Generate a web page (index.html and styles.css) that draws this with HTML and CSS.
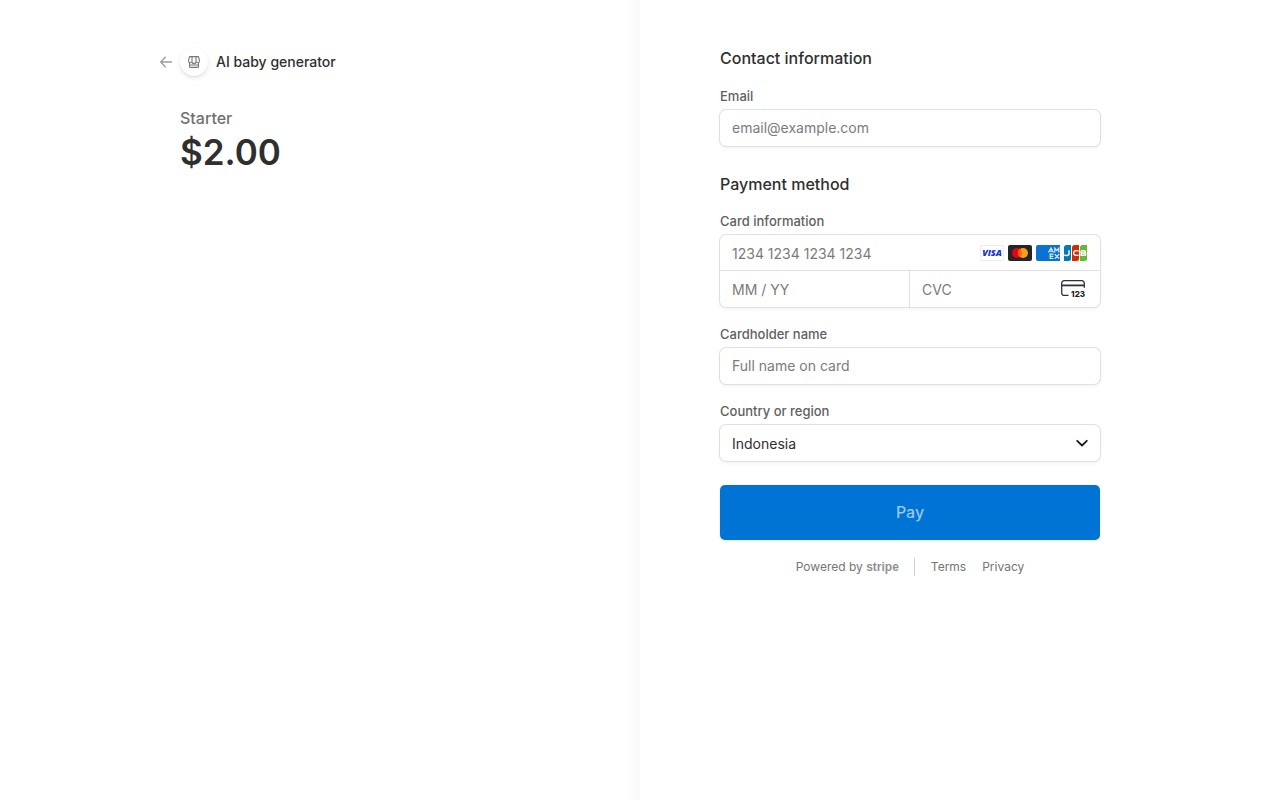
FILE: index.html
```html
<!DOCTYPE html>
<html lang="en">
<head>
<meta charset="utf-8">
<meta name="viewport" content="width=device-width, initial-scale=1">
<title>AI baby generator</title>
<link rel="stylesheet" href="styles.css">
</head>
<body>
<div class="checkout">
  <section class="overview">
    <div class="overview-inner">
      <header class="business">
        <a class="back" href="#" aria-label="Back">
          <svg width="12" height="12" viewBox="0 0 12 12" fill="none" stroke="currentColor" stroke-width="1.3" stroke-linecap="round" stroke-linejoin="round"><path d="M11.5 6H.8M5.3 1.2.7 6l4.6 4.8"/></svg>
        </a>
        <span class="avatar">
          <svg width="12" height="12" viewBox="0 0 12 12" fill="none" stroke="currentColor" stroke-width="1.100" stroke-linejoin="round"><path d="M1.500.6h9l.9 3.700v1a1.800 1.800 0 0 1-3.400.3 2 2 0 0 1-4 0 1.800 1.800 0 0 1-3.400-.3v-1zM4 .6v5M8 .6v5M1.500 7v3.400a1 1 0 0 0 1 1h7a1 1 0 0 0 1-1V7M1.500 9h9"/></svg>
        </span>
        <h1 class="business-name">AI baby generator</h1>
      </header>
      <div class="product">
        <p class="product-name">Starter</p>
        <p class="price">$2.00</p>
      </div>
    </div>
  </section>
  <main class="payment">
    <form class="payment-form">
      <h2 class="heading">Contact information</h2>
      <div class="field">
        <label class="label" for="email">Email</label>
        <input class="input box" id="email" type="email" placeholder="email@example.com">
      </div>
      <h2 class="heading heading-next">Payment method</h2>
      <div class="field">
        <label class="label" for="card">Card information</label>
        <div class="card box">
          <div class="card-number">
            <input class="input" id="card" type="text" placeholder="1234 1234 1234 1234">
            <div class="brands">
              <svg width="24" height="16" viewBox="0 0 24 16" role="img" aria-label="Visa"><rect x=".5" y=".5" width="23" height="15" rx="1.500" fill="#fff" stroke="#ececf2"/><text class="visa" x="12" y="11" text-anchor="middle">VISA</text></svg>
              <svg width="24" height="16" viewBox="0 0 24 16" role="img" aria-label="Mastercard"><rect width="24" height="16" rx="2" fill="#252525"/><circle cx="9" cy="8" r="5" fill="#eb001b"/><circle cx="15" cy="8" r="5" fill="#f79e1b"/><path d="M12 4a5 5 0 0 1 0 8 5 5 0 0 1 0-8z" fill="#ff5f00"/></svg>
              <svg width="24" height="16" viewBox="0 0 24 16" role="img" aria-label="American Express"><path d="M2 0h22v16H2a2 2 0 0 1-2-2V2a2 2 0 0 1 2-2z" fill="#0b72d2"/><path d="M12.500 7.500 15 3l2.500 4.500M13.700 6.200h2.700M18.800 7.500V3.200l2 2.400 2-2.400v4.300M17.500 9.200h-3.300v4.300h3.300M14.200 11.300h3M18.800 9.200l4.400 4.300M23.200 9.200l-4.400 4.300" fill="none" stroke="#d9eafa" stroke-width="1.200"/></svg>
              <svg width="24" height="16" viewBox="0 0 24 16" role="img" aria-label="JCB"><path d="M2.500 0H7v13.500A2.500 2.500 0 0 1 4.500 16H0V2.500A2.500 2.500 0 0 1 2.500 0z" fill="#047ab1"/><path d="M10.500 0H15v13.500a2.500 2.500 0 0 1-2.500 2.500H8V2.500A2.500 2.500 0 0 1 10.500 0z" fill="#d42d06"/><path d="M18.500 0H23v13.500a2.500 2.500 0 0 1-2.500 2.500H16V2.500A2.500 2.500 0 0 1 18.500 0z" fill="#67b637"/><path d="M5 5.200v3.900c0 1.900-3.400 1.700-5 .7M14.600 6.200c-2-1-5-.8-5 1.800s3 2.800 5 1.800M17.200 5.800h2.900c1.700 0 1.700 2.200 0 2.200h-2.900 3.200c1.900 0 1.900 2.300 0 2.300h-3.200V5.800" fill="none" stroke="#fff" stroke-width="1.400"/></svg>
            </div>
          </div>
          <div class="card-details">
            <div class="expiry">
              <input class="input" type="text" placeholder="MM / YY" aria-label="Expiration">
            </div>
            <div class="cvc">
              <input class="input" type="text" placeholder="CVC" aria-label="CVC">
              <svg class="cvc-icon" width="24" height="18" viewBox="0 0 24 18" aria-hidden="true"><path d="M7.500 15.400H3.200A2.500 2.500 0 0 1 .7 12.900V3.200A2.500 2.500 0 0 1 3.200.7h17.600a2.500 2.500 0 0 1 2.500 2.500v4.600" fill="none" stroke="#30313d" stroke-width="1.300"/><path d="M.7 4.500h22.600v1.800H.7z" fill="#30313d"/><text class="cvc-digits" x="24" y="17" text-anchor="end">123</text></svg>
            </div>
          </div>
        </div>
      </div>
      <div class="field field-next">
        <label class="label" for="name">Cardholder name</label>
        <input class="input box" id="name" type="text" placeholder="Full name on card">
      </div>
      <div class="field field-next">
        <label class="label" for="country">Country or region</label>
        <div class="select-wrap box">
          <select class="input select" id="country"><option>Indonesia</option></select>
          <svg class="chevron" width="12" height="8" viewBox="0 0 12 8" fill="none" stroke="#1a1a1a" stroke-width="1.800" stroke-linecap="round" stroke-linejoin="round"><path d="M1.200 1.800 6 6.500l4.800-4.700"/></svg>
        </div>
      </div>
      <button class="pay" type="submit">Pay</button>
      <footer class="footer">
        <a class="powered" href="#">Powered by <span class="stripe">stripe</span></a>
        <nav class="legal">
          <a href="#">Terms</a>
          <a href="#">Privacy</a>
        </nav>
      </footer>
    </form>
  </main>
</div>
</body>
</html>
```
FILE: styles.css
```css
* {
  box-sizing: border-box;
}

body {
  margin: 0;
  background: #fff;
  color: #2f2f2f;
  font-family: Inter, "Liberation Sans", sans-serif;
  font-size: 14px;
}

h1, h2, p {
  margin: 0;
}

a {
  color: inherit;
  text-decoration: none;
}

.checkout {
  display: grid;
  grid-template-columns: 1fr 1fr;
  min-height: 100vh;
}

.overview {
  padding: 48px 80px;
  background: linear-gradient(to left, #f9f9f9, #fff 16px);
}

.overview-inner {
  width: 100%;
  max-width: 400px;
  margin-left: auto;
}

.business {
  display: flex;
  align-items: center;
}

.back {
  display: flex;
  width: 20px;
  color: #9b9b9b;
}

.avatar {
  display: flex;
  align-items: center;
  justify-content: center;
  width: 28px;
  height: 28px;
  margin-right: 8px;
  border-radius: 50%;
  color: #777;
  box-shadow: 0 2px 5px rgba(0, 0, 0, 0.1), 0 1px 1px rgba(0, 0, 0, 0.06);
}

.business-name {
  font-size: 14px;
  font-weight: 500;
  line-height: 18px;
}

.product {
  padding: 32px 0 0 20px;
}

.product-name {
  color: #707070;
  font-size: 16px;
  font-weight: 500;
  line-height: 20px;
}

.price {
  font-size: 35px;
  font-weight: 600;
  line-height: 48px;
}

.payment {
  padding: 48px 80px;
}

.payment-form {
  width: 100%;
  max-width: 380px;
}

.heading {
  margin-bottom: 19px;
  font-size: 16px;
  font-weight: 500;
  line-height: 20px;
}

.heading-next {
  margin-top: 28px;
  margin-bottom: 18px;
}

.field-next {
  margin-top: 18px;
}

.label {
  display: block;
  margin-bottom: 5px;
  color: #5f5f5f;
  font-size: 13px;
  font-weight: 500;
  line-height: 18px;
}

.input {
  display: block;
  width: 100%;
  min-width: 0;
  height: 36px;
  padding: 0 12px;
  border: 0;
  outline: 0;
  background: transparent;
  color: #2f2f2f;
  font: inherit;
}

.input::placeholder {
  color: #7b7b7b;
  opacity: 1;
}

.box {
  border-radius: 6px;
  background: #fff;
  box-shadow: 0 0 0 1px #e0e0e0, 0 2px 4px rgba(0, 0, 0, 0.06);
}

.input.box {
  padding-bottom: 2px;
}

.card-number {
  display: flex;
  align-items: center;
  height: 36px;
  padding-right: 12px;
  border-bottom: 1px solid #e0e0e0;
}

.card-number .input {
  padding-top: 2px;
}

.brands {
  display: flex;
  gap: 4px;
}

.visa {
  fill: #1434cb;
  font-family: "Open Sans", sans-serif;
  font-size: 9px;
  font-style: italic;
  font-weight: 800;
}

.card-details {
  display: grid;
  grid-template-columns: 1fr 1fr;
}

.expiry {
  border-right: 1px solid #e0e0e0;
}

.cvc {
  display: flex;
  align-items: center;
  padding-right: 15px;
}

.cvc-icon {
  flex: none;
}

.cvc-digits {
  fill: #1a1a1a;
  font-size: 8px;
  font-weight: 800;
}

.select-wrap {
  display: grid;
  align-items: center;
}

.select,
.chevron {
  grid-area: 1 / 1;
}

.select {
  appearance: none;
}

.chevron {
  justify-self: end;
  margin-right: 12px;
  pointer-events: none;
}

.pay {
  display: block;
  width: 100%;
  margin-top: 24px;
  padding: 17px;
  border: 0;
  border-radius: 5px;
  background: #0074d4;
  color: #99c7ee;
  font: 500 16px/21px Inter, "Liberation Sans", sans-serif;
  box-shadow: 0 1px 3px rgba(0, 0, 0, 0.1);
}

.footer {
  display: flex;
  justify-content: center;
  margin-top: 18px;
  color: #757575;
  font-size: 12px;
  line-height: 18px;
}

.powered {
  padding-right: 15px;
  border-right: 1px solid #cfcfcf;
}

.stripe {
  color: #929292;
  font-family: "Liberation Sans", Arial, sans-serif;
  font-size: 12px;
  font-weight: 700;
}

.legal {
  display: flex;
  gap: 16px;
  padding-left: 16px;
}
```
